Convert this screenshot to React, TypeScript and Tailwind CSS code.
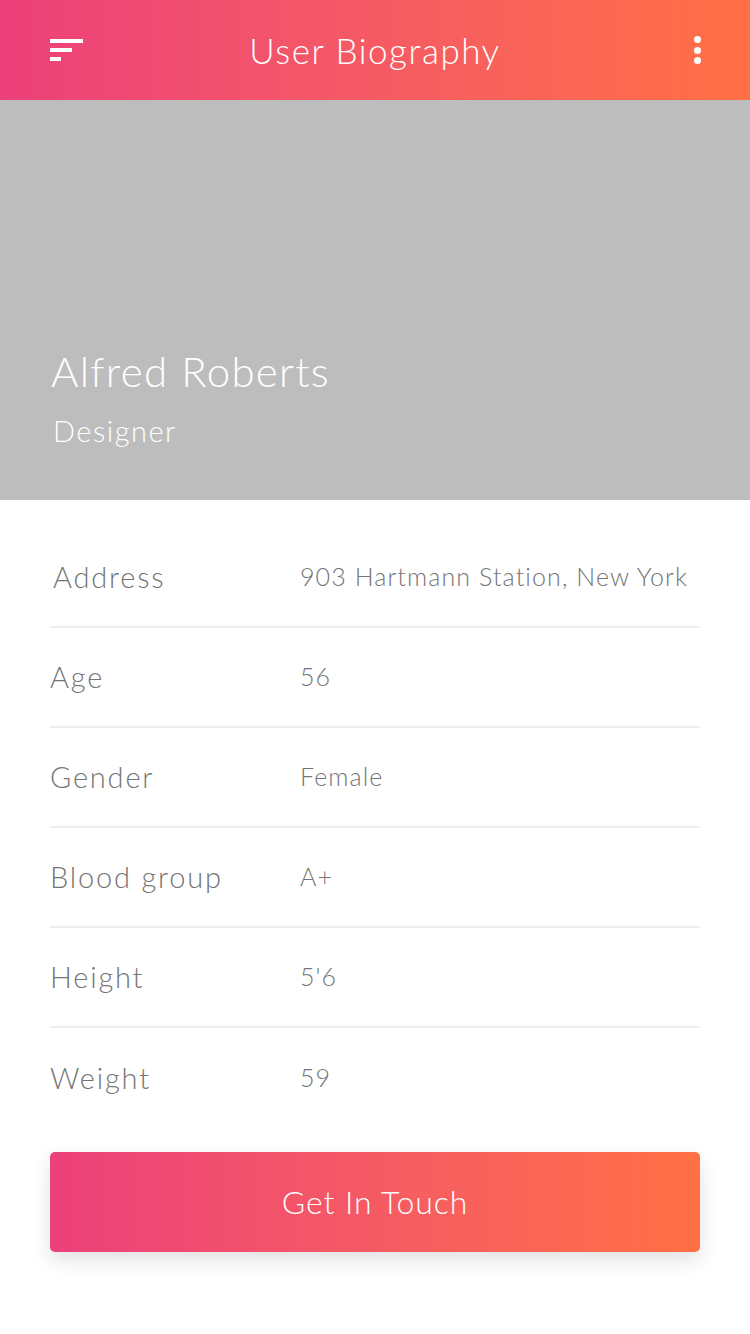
import React from "react";

const rows: [string, string][] = [
  ["Address", "903 Hartmann Station, New York"],
  ["Age", "56"],
  ["Gender", "Female"],
  ["Blood group", "A+"],
  ["Height", "5'6"],
  ["Weight", "59"],
];

export default function App() {
  return (
    <div
      className="w-[750px] min-h-[1334px] bg-white"
      style={{ fontFamily: "Lato, 'Open Sans', sans-serif" }}
    >
      <header className="h-[100px] flex items-center justify-between px-[50px] bg-gradient-to-r from-[#ec407a] to-[#ff7043]">
        <svg width="34" height="24" viewBox="0 0 34 24" className="fill-white">
          <rect x="0" y="1" width="33" height="4" />
          <rect x="0" y="10" width="22" height="4" />
          <rect x="0" y="19" width="11" height="4" />
        </svg>
        <h1 className="text-white text-[35px] font-light tracking-[1.5px]">User Biography</h1>
        <div className="flex w-[34px] justify-end">
          <div className="flex flex-col gap-[3.5px] mr-[-1px]">
            <span className="block w-[7px] h-[7px] rounded-full bg-white" />
            <span className="block w-[7px] h-[7px] rounded-full bg-white" />
            <span className="block w-[7px] h-[7px] rounded-full bg-white" />
          </div>
        </div>
      </header>

      <section className="h-[400px] bg-[#bdbdbd] flex flex-col justify-end px-[51px] pb-[55px]">
        <div className="text-white text-[42px] font-light leading-none tracking-[1.3px]">Alfred Roberts</div>
        <div className="text-white text-[29px] font-light leading-none mt-[24px] ml-[2px] tracking-[1.5px]">Designer</div>
      </section>

      <div className="px-[50px] pt-[28px]">
        {rows.map(([k, v], i) => (
          <div
            key={k}
            className={`flex items-center h-[100px] ${i < rows.length - 1 ? "border-b-2 border-[#eeeeee]" : ""}`}
          >
            <div className={`w-[250px] text-[29px] text-[#757575] font-light tracking-[1.8px] ${i === 0 ? "pl-[3px]" : ""}`}>{k}</div>
            <div className="text-[25px] text-[#757575] font-light tracking-[1.1px]">{v}</div>
          </div>
        ))}
        <button className="mt-[24px] w-full h-[100px] rounded-[5px] bg-gradient-to-r from-[#ec407a] to-[#ff7043] text-white text-[32px] font-light tracking-[0.9px] shadow-[0_8px_20px_rgba(0,0,0,0.12)]">
          Get In Touch
        </button>
      </div>
    </div>
  );
}
